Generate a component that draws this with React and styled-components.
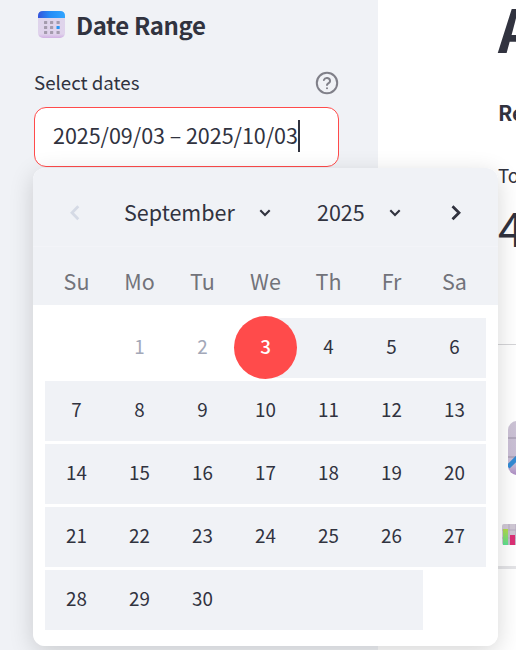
import React from "react";
import styled, { createGlobalStyle } from "styled-components";

const Global = createGlobalStyle`
  *, *::before, *::after { box-sizing: border-box; }
  body {
    margin: 0;
    overflow: hidden;
    background: #fff;
    color: #31333f;
    font-family: "Noto Sans CJK SC", "Open Sans", sans-serif;
  }
`;

const Page = styled.div`
  position: relative;
  display: flex;
  width: 516px;
  height: 650px;
  overflow: hidden;
`;

const Sidebar = styled.aside`
  flex: 0 0 378px;
  padding: 3px 39px 0 34px;
  background: #f0f2f6;
`;

const Heading = styled.h3`
  display: flex;
  align-items: center;
  gap: 11px;
  height: 43px;
  margin: 0;
  padding-left: 4px;
  font-size: 24px;
  font-weight: 600;
  letter-spacing: -0.4px;
  line-height: 42px;
  white-space: nowrap;
`;

const LabelRow = styled.div`
  display: flex;
  align-items: center;
  justify-content: space-between;
  height: 26px;
  margin-top: 24px;
  font-size: 18.7px;
  line-height: 24px;
`;

const LabelText = styled.span`
  height: 26px;
`;

const DateField = styled.div`
  display: flex;
  align-items: center;
  height: 60px;
  margin-top: 11px;
  padding-left: 18px;
  border: 1px solid #ff4b4b;
  border-radius: 12px;
  background: #fff;
  font-size: 21.5px;
  letter-spacing: -0.04px;
  line-height: 54px;
  white-space: nowrap;
`;

const DateText = styled.span`
  height: 58px;
`;

const Caret = styled.span`
  width: 2px;
  height: 32px;
  margin-bottom: 2px;
  background: #31333f;
`;

const Main = styled.main`
  flex: 1;
  display: flex;
  flex-direction: column;
  padding-left: 120px;
  overflow: hidden;
  white-space: nowrap;
`;

const Title = styled.h1`
  height: 64px;
  margin: 0;
  font-size: 59px;
  line-height: 56px;
`;

const Subtitle = styled.div`
  height: 30px;
  margin-top: 35px;
  font-size: 21px;
  font-weight: 700;
  line-height: 26px;
`;

const MetricLabel = styled.div`
  height: 26px;
  margin-top: 33px;
  font-size: 18.8px;
  line-height: 25px;
`;

const MetricValue = styled.div`
  height: 60px;
  margin-top: 12px;
  font-size: 47px;
  line-height: 54px;
`;

const Rule = styled.div`
  flex: none;
  height: ${(p) => p.$size}px;
  margin-top: ${(p) => p.$gap}px;
  background: ${(p) => p.$color};
`;

const SectionIcon = styled.div`
  flex: none;
  height: 54px;
  margin: 76px 0 0 10px;
  svg { display: block; }
`;

const TabIcon = styled.div`
  flex: none;
  height: 22px;
  margin: 49px 0 0 4px;
  svg { display: block; }
`;

const Popover = styled.section`
  position: absolute;
  left: 33px;
  top: 168px;
  width: 465px;
  height: 478px;
  overflow: hidden;
  border-radius: 12px;
  background: #fff;
`;

const Shadow = styled.div`
  position: absolute;
  left: 33px;
  top: 168px;
  width: 465px;
  height: 478px;
  border-radius: 12px;
  box-shadow: 0 6px 24px rgba(0, 0, 0, 0.16);
`;

const CalendarHeader = styled.header`
  height: 137px;
  background: #f0f2f6;
`;

const MonthBar = styled.div`
  display: flex;
  align-items: center;
  height: 79px;
  padding: 12px 32px 0 32px;
  border-bottom: 1px solid #f3f4f8;
  font-size: 21.5px;
  line-height: 64px;
  svg { flex: none; display: block; }
`;

const Picker = styled.div`
  display: flex;
  align-items: center;
  justify-content: space-between;
  width: ${(p) => p.$width}px;
  margin-left: ${(p) => p.$gap}px;
`;

const PickerText = styled.span`
  height: 66px;
`;

const NextButton = styled.div`
  margin-left: auto;
`;

const WeekRow = styled.div`
  display: grid;
  grid-template-columns: repeat(7, 63px);
  padding-left: 12px;
`;

const Weekday = styled.div`
  height: 58px;
  padding-top: 5px;
  color: #72737a;
  font-size: 21.5px;
  line-height: 58px;
  text-align: center;
`;

const Month = styled.div`
  padding-top: 11px;
`;

const Day = styled.div`
  height: 63px;
  color: ${(p) => (p.$disabled ? "#a3a8b8" : "#31333f")};
  font-size: 18.8px;
  line-height: 59px;
  text-align: center;
  background: ${(p) => (p.$filled ? "linear-gradient(#f0f2f6, #f0f2f6) 0 2px / 100% 60px no-repeat" : "none")};
`;

const Selected = styled.span`
  display: block;
  width: 63px;
  height: 63px;
  border-radius: 50%;
  background: #ff4b4b;
  color: #fff;
  font-weight: 500;
`;

const HalfDay = styled(Day)`
  background: linear-gradient(#f0f2f6, #f0f2f6) 32px 2px / 31px 60px no-repeat;
`;

function CalendarIcon() {
  return (
    <svg width="27" height="27" viewBox="0 0 27 27">
      <defs>
        <linearGradient id="calBody" x2="0" y2="1">
          <stop offset="0" stopColor="#ddd5ea" />
          <stop offset=".85" stopColor="#e0d3ec" />
          <stop offset="1" stopColor="#d1b1e3" />
        </linearGradient>
        <linearGradient id="calTop">
          <stop offset="0" stopColor="#3454dc" />
          <stop offset=".45" stopColor="#268cf6" />
          <stop offset="1" stopColor="#30a5ff" />
        </linearGradient>
      </defs>
      <rect width="27" height="27" rx="5" fill="url(#calBody)" />
      <path d="M0 7V5Q0 0 5 0H22Q27 0 27 5V7Z" fill="url(#calTop)" />
      <g fill="#a49bad">
        {[10, 15, 20].flatMap((y) => [6, 12, 18.5].map((x) => (
          <rect key={`${x}-${y}`} x={x} y={y} width="3.2" height="3" rx=".5" fill={x === 18.5 && y === 15 ? "#2796f3" : undefined} />
        )))}
      </g>
    </svg>
  );
}

function HelpIcon() {
  return (
    <svg width="24" height="24" viewBox="0 0 24 24" fill="none" stroke="#808089" strokeWidth="2" strokeLinecap="round" strokeLinejoin="round">
      <circle cx="12" cy="12" r="10.2" />
      <path d="M8.9 9a3.2 3.2 0 0 1 6.2 1c0 2.1-3.1 2.6-3.1 4M12 17.3h.01" />
    </svg>
  );
}

function Arrow({ left }) {
  return (
    <svg width="20" height="20" viewBox="0 0 20 20" fill="none" stroke={left ? "#d5dae5" : "#31333f"} strokeWidth="2.8" strokeLinecap="butt">
      <path d={left ? "M13.3 3.3L7 9.8L13.3 16.3" : "M6.5 3.3L13 9.8L6.5 16.3"} />
    </svg>
  );
}

function Down() {
  return (
    <svg width="12" height="8" viewBox="0 0 12 8" fill="none" stroke="#31333f" strokeWidth="2.1">
      <path d="M1.3 1.3L6 6L10.7 1.3" />
    </svg>
  );
}

function TrendIcon() {
  return (
    <svg width="54" height="54" viewBox="0 0 54 54">
      <defs>
        <linearGradient id="trendBody" x2="0" y2="1">
          <stop offset="0" stopColor="#cdc4d6" />
          <stop offset=".8" stopColor="#c8bcd5" />
          <stop offset="1" stopColor="#ad8dc5" />
        </linearGradient>
      </defs>
      <rect width="54" height="54" rx="9" fill="url(#trendBody)" />
      <path d="M0 17H54M0 36H54M17 0V54M36 0V54" stroke="#aaa0b5" strokeWidth="1.5" />
      <path d="M0 46L17 29L28 38L54 12" fill="none" stroke="#338bd4" strokeWidth="4.5" />
    </svg>
  );
}

function BarsIcon() {
  return (
    <svg width="22" height="22" viewBox="0 0 22 22">
      <defs>
        <linearGradient id="greenBar" x2="0" y2="1">
          <stop offset="0" stopColor="#b3db4b" />
          <stop offset="1" stopColor="#5ce092" />
        </linearGradient>
      </defs>
      <rect width="22" height="21" rx="2" fill="#d0c8d5" />
      <path d="M0 6H22M0 14H22M7 0V21M14 0V21" stroke="#b6adc0" />
      <path d="M1 5H6V21H1Z" fill="url(#greenBar)" />
      <path d="M8 11H13V21H8Z" fill="#dc3075" />
    </svg>
  );
}

const weekdays = ["Su", "Mo", "Tu", "We", "Th", "Fr", "Sa"];
const days = Array.from({ length: 35 }, (_, i) => i);

function DateCell({ index }) {
  if (index === 3) return <HalfDay><Selected>3</Selected></HalfDay>;
  return (
    <Day $disabled={index < 3} $filled={index > 3 && index < 34}>
      {index > 0 && index <= 30 ? index : ""}
    </Day>
  );
}

export default function App() {
  return (
    <>
      <Global />
      <Page>
        <Sidebar>
          <Heading><CalendarIcon />Date Range</Heading>
          <LabelRow><LabelText>Select dates</LabelText><HelpIcon /></LabelRow>
          <DateField><DateText>2025/09/03 – 2025/10/03</DateText><Caret /></DateField>
        </Sidebar>
        <Main>
          <Title>A</Title>
          <Subtitle>Re</Subtitle>
          <MetricLabel>To</MetricLabel>
          <MetricValue>4</MetricValue>
          <Rule $size={1} $gap={84} $color="#d5d5d8" />
          <SectionIcon><TrendIcon /></SectionIcon>
          <TabIcon><BarsIcon /></TabIcon>
          <Rule $size={3} $gap={20} $color="#e4e4e7" />
        </Main>
        <Shadow />
        <Popover>
          <CalendarHeader>
            <MonthBar>
              <Arrow left />
              <Picker $width={147} $gap={39}><PickerText>September</PickerText><Down /></Picker>
              <Picker $width={84} $gap={46}><PickerText>2025</PickerText><Down /></Picker>
              <NextButton><Arrow /></NextButton>
            </MonthBar>
            <WeekRow>{weekdays.map((d) => <Weekday key={d}>{d}</Weekday>)}</WeekRow>
          </CalendarHeader>
          <Month>
            <WeekRow>{days.map((d) => <DateCell key={d} index={d} />)}</WeekRow>
          </Month>
        </Popover>
      </Page>
    </>
  );
}
